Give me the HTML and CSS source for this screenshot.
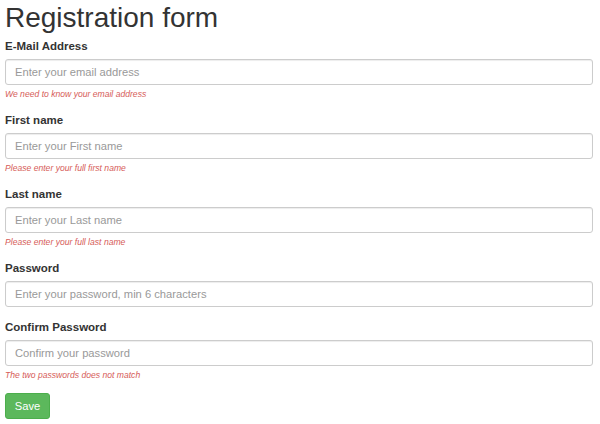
FILE: index.html
```html
<!DOCTYPE html>
<html lang="en">
<head>
<meta charset="utf-8">
<title>Registration form</title>
<link rel="stylesheet" href="styles.css">
</head>
<body>
<div class="container">
  <h1 class="title">Registration form</h1>
  <form class="form">
    <div class="form-group">
      <label class="form-label" for="email">E-Mail Address</label>
      <input class="form-control" id="email" type="text" placeholder="Enter your email address">
      <div class="help-block">We need to know your email address</div>
    </div>
    <div class="form-group">
      <label class="form-label" for="first">First name</label>
      <input class="form-control" id="first" type="text" placeholder="Enter your First name">
      <div class="help-block">Please enter your full first name</div>
    </div>
    <div class="form-group">
      <label class="form-label" for="last">Last name</label>
      <input class="form-control" id="last" type="text" placeholder="Enter your Last name">
      <div class="help-block">Please enter your full last name</div>
    </div>
    <div class="form-group">
      <label class="form-label" for="pw">Password</label>
      <input class="form-control" id="pw" type="password" placeholder="Enter your password, min 6 characters">
    </div>
    <div class="form-group">
      <label class="form-label" for="pw2">Confirm Password</label>
      <input class="form-control" id="pw2" type="password" placeholder="Confirm your password">
      <div class="help-block">The two passwords does not match</div>
    </div>
    <button class="btn-save" type="button">Save</button>
  </form>
</div>
</body>
</html>
```
FILE: styles.css
```css
html, body {
  margin: 0;
  padding: 0;
  background: #ffffff;
}
body {
  font-family: "Liberation Sans", Arial, Helvetica, sans-serif;
  color: #333333;
}
.container {
  padding: 0 7px 0 5px;
}
.title {
  margin: 2px 0 4px 0;
  font-size: 28px;
  line-height: 32px;
  font-weight: normal;
  color: #333333;
}
.form {
  display: flex;
  flex-direction: column;
}
.form-group {
  display: flex;
  flex-direction: column;
  margin-bottom: 12px;
}
.form-label {
  font-size: 11.5px;
  line-height: 17px;
  font-weight: bold;
  margin-bottom: 4px;
  color: #333333;
}
.form-control {
  box-sizing: border-box;
  height: 26px;
  width: 100%;
  margin: 0;
  padding: 0 9px;
  border: 1px solid #cccccc;
  border-radius: 3px;
  box-shadow: inset 0 1px 1px rgba(0, 0, 0, 0.075);
  font-family: "Liberation Sans", Arial, Helvetica, sans-serif;
  font-size: 11.2px;
  color: #555555;
  background: #ffffff;
  outline: none;
}
.form-control::placeholder {
  color: #999999;
}
.help-block {
  margin-top: 3px;
  font-size: 8.6px;
  line-height: 12px;
  font-style: italic;
  color: #d65c58;
}
.btn-save {
  align-self: flex-start;
  box-sizing: border-box;
  width: 45px;
  height: 26px;
  padding: 0;
  border: 1px solid #4cae4c;
  border-radius: 3px;
  background: #5cb85c;
  color: #ffffff;
  font-family: "Liberation Sans", Arial, Helvetica, sans-serif;
  font-size: 11.2px;
}
```
